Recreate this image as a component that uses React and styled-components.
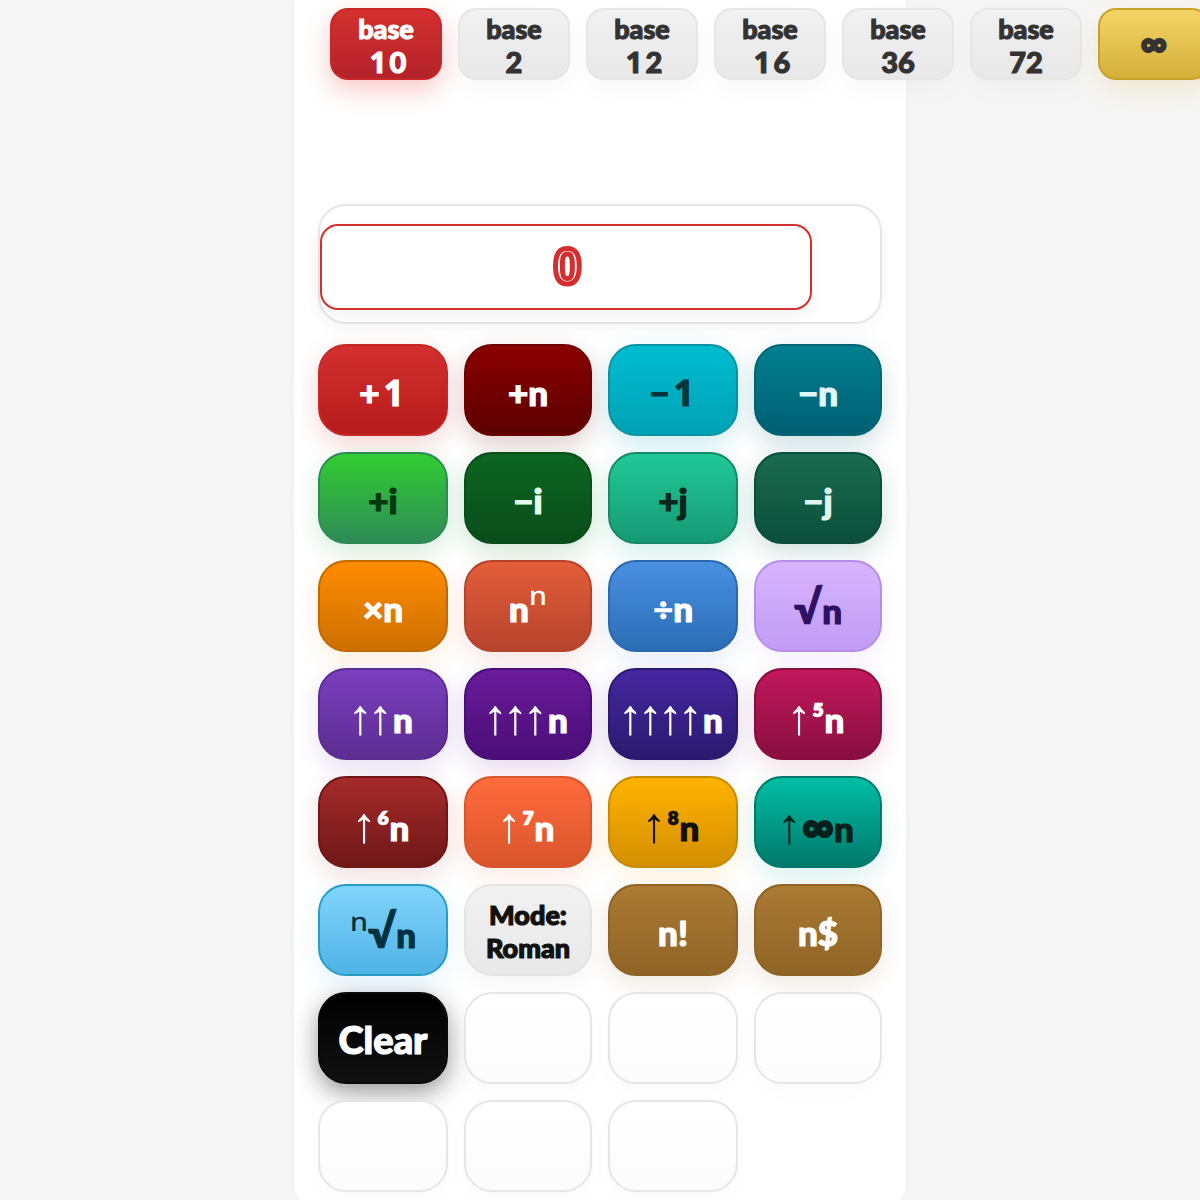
import React from 'react'
import styled, { createGlobalStyle } from 'styled-components'

const GlobalStyle = createGlobalStyle`
  html, body {
    margin: 0;
    height: 1200px;
    overflow: hidden;
    background: #f6f6f6;
  }
`

const Panel = styled.main`
  box-sizing: border-box;
  width: 612px;
  height: 1208px;
  margin: 0 auto;
  padding: 8px 24px 0;
  background: #fff;
  border-radius: 0 0 24px 24px;
  box-shadow: 0 0 12px rgba(0, 0, 0, 0.03);
  font-family: 'Lato', 'Liberation Sans', sans-serif;
  font-weight: 900;
`

const Tabs = styled.nav`
  display: flex;
  gap: 16px;
  width: 900px;
  padding-left: 12px;
  margin-bottom: 124px;
`

const Tab = styled.button`
  box-sizing: border-box;
  flex: 0 0 112px;
  height: 72px;
  padding: 2px 0 0;
  border: 2px solid ${p => p.$line};
  border-radius: 18px;
  background: linear-gradient(180deg, ${p => p.$from}, ${p => p.$to});
  box-shadow: 0 10px 26px ${p => p.$glow};
  color: ${p => p.$ink};
  font: inherit;
  font-size: 27px;
  line-height: 33px;
  -webkit-text-stroke: 1.1px ${p => p.$ink};
`

const TabNumber = styled.span`
  font-size: 29px;
`

const Display = styled.section`
  box-sizing: border-box;
  width: 564px;
  height: 120px;
  padding-top: 18px;
  margin-bottom: 20px;
  background: #fff;
  border: 2px solid #e6e6e6;
  border-radius: 28px;
  box-shadow: 0 6px 18px rgba(0, 0, 0, 0.03);
`

const Readout = styled.output`
  box-sizing: border-box;
  display: flex;
  align-items: center;
  justify-content: center;
  width: 492px;
  height: 86px;
  padding-left: 3px;
  background: #fff;
  border: 2px solid #d32f2f;
  border-radius: 18px;
  box-shadow: 0 6px 20px rgba(0, 0, 0, 0.05);
  color: #fff;
  font-family: 'Liberation Sans', sans-serif;
  font-weight: 700;
  font-size: 50px;
  -webkit-text-stroke: 5px #d32f2f;
`

const Keypad = styled.div`
  display: grid;
  grid-template-columns: 130px 128px 130px 128px;
  grid-auto-rows: 92px;
  gap: 16px;
`

const Key = styled.button`
  box-sizing: border-box;
  padding: ${p => p.$lift || 4}px 0 0;
  border: 2px solid ${p => p.$line};
  border-radius: 28px;
  background: linear-gradient(180deg, ${p => p.$from}, ${p => p.$to});
  box-shadow: 0 8px 24px ${p => p.$glow};
  color: ${p => p.$ink};
  font: inherit;
  font-size: ${p => p.$size || 35}px;
  line-height: ${p => p.$leading || 36}px;
  white-space: pre;
  -webkit-text-stroke: 1.2px ${p => p.$ink};
`

// the arrows and the raised n are a much lighter cut than the rest of the label
const Arrow = styled.span`
  display: inline-block;
  width: 20px;
  font-family: 'Liberation Sans', sans-serif;
  font-weight: 400;
  font-size: 50px;
  line-height: 0;
  text-indent: -5px;
  -webkit-text-stroke: 0;
  transform: translateY(1px);
`

const RaisedN = styled.span`
  display: inline-block;
  font-family: 'Noto Sans', sans-serif;
  font-weight: 500;
  font-size: 44px;
  line-height: 30px;
  -webkit-text-stroke: 0;
  transform: translateY(-4px);
`

const Bar = styled.span`
  margin: 0 3px 0 4px;
  font-family: 'Open Sans', sans-serif;
  font-weight: 700;
`

const Loop = styled.span`
  font-size: 1.25em;
  line-height: 0.8;
  -webkit-text-stroke: 2px currentColor;
`

const Power = styled.span`
  display: inline-block;
  font-size: 1.1em;
  line-height: 0.8;
  -webkit-text-stroke: 0.4px currentColor;
  transform: translateY(2px);
`

const Root = styled.span`
  font-size: 1.3em;
  line-height: 0.8;
  -webkit-text-stroke: 0.8px currentColor;
`

const Divide = styled.span`
  -webkit-text-stroke: 0.4px currentColor;
`

const glyphs = { '↑': Arrow, 'ⁿ': RaisedN, 1: Bar, '∞': Loop, '⁵': Power, '⁶': Power, '⁷': Power, '⁸': Power, '√': Root, '÷': Divide }

const renderLabel = text =>
  Array.from(text).map((ch, i) => {
    const Glyph = glyphs[ch]
    return Glyph ? <Glyph key={i}>{ch}</Glyph> : ch
  })

const tabs = [
  { top: 'base', bottom: '10', from: '#d5302f', to: '#b3222a', line: '#c62828', ink: '#fff', glow: 'rgba(229, 57, 53, 0.28)' },
  { top: 'base', bottom: '2' },
  { top: 'base', bottom: '12' },
  { top: 'base', bottom: '16' },
  { top: 'base', bottom: '36' },
  { top: 'base', bottom: '72' },
  { bottom: '∞', from: '#f3d566', to: '#d5af3a', line: '#c9a22c', glow: 'rgba(212, 175, 55, 0.2)' },
]

const key = (label, from, to, line, ink, glow, extra) => ({ label, from, to, line, ink, glow, ...extra })
const arrowRow = { lift: 10 }

const keys = [
  key('+1', '#d32f2f', '#b71c1c', '#c62828', '#fff', 'rgba(211, 47, 47, 0.2)'),
  key('+n', '#8b0000', '#5c0000', '#6d0000', '#fff', 'rgba(90, 0, 0, 0.2)'),
  key('−1', '#00bcd0', '#00a3b5', '#0a93a3', '#02353c', 'rgba(0, 160, 180, 0.2)'),
  key('−n', '#00808f', '#005f73', '#006473', '#e0f7fa', 'rgba(0, 96, 115, 0.2)'),
  key('+i', '#32cd32', '#2e8b57', '#2e8b57', '#013a0c', 'rgba(46, 160, 80, 0.2)'),
  key('−i', '#0b6623', '#0a4d1a', '#0a4d1a', '#e6ffea', 'rgba(20, 130, 50, 0.2)'),
  key('+j', '#20c997', '#179a73', '#168a68', '#06261c', 'rgba(32, 180, 140, 0.2)'),
  key('−j', '#1a6b4f', '#0b4f3a', '#0b4f3a', '#e0f5ee', 'rgba(20, 100, 75, 0.2)'),
  key('×n', '#ff8c00', '#cc7000', '#c06a00', '#fff', 'rgba(255, 140, 0, 0.14)'),
  key('nⁿ', '#e35d3a', '#b7442c', '#b5432c', '#fff', 'rgba(200, 80, 50, 0.14)'),
  key('÷n', '#4a90e2', '#2a6db5', '#2a69ad', '#fff', 'rgba(70, 140, 220, 0.14)'),
  key('√n', '#d8b4fe', '#c09cf5', '#b48ee8', '#2e1065', 'rgba(190, 150, 250, 0.14)'),
  key('↑↑n', '#7b3fbf', '#5c2d91', '#5c2d91', '#fff', 'rgba(100, 50, 170, 0.16)', arrowRow),
  key('↑↑↑n', '#6a1b9a', '#4a0e78', '#4a0e78', '#fff', 'rgba(90, 20, 140, 0.16)', arrowRow),
  key('↑↑↑↑n', '#4527a0', '#2a1a6e', '#2a1a6e', '#fff', 'rgba(60, 30, 140, 0.16)', arrowRow),
  key('↑⁵n', '#c2185b', '#880e3f', '#880e3f', '#fff', 'rgba(180, 20, 80, 0.14)', arrowRow),
  key('↑⁶n', '#a52a2a', '#701818', '#701818', '#fff', 'rgba(140, 30, 30, 0.14)', arrowRow),
  key('↑⁷n', '#ff6b3d', '#d9552b', '#d9552b', '#fff', 'rgba(255, 110, 60, 0.14)', arrowRow),
  key('↑⁸n', '#ffb300', '#d48f00', '#c78a00', '#111', 'rgba(255, 180, 0, 0.14)', arrowRow),
  key('↑∞n', '#00bfa5', '#00796b', '#00796b', '#06201c', 'rgba(0, 180, 150, 0.16)', arrowRow),
  key('ⁿ√n', '#81d4fa', '#4fb3e6', '#2a9dc4', '#01303f', 'rgba(90, 190, 240, 0.16)'),
  key('Mode:\nRoman', '#f1f1f1', '#e8e8e8', '#e5e5e5', '#111', 'rgba(0, 0, 0, 0.04)', { size: 27, leading: 33, lift: 1 }),
  key('n!', '#ab7a33', '#8f6426', '#8f6426', '#fff', 'rgba(140, 100, 40, 0.14)'),
  key('n$', '#ab7a33', '#8f6426', '#8f6426', '#fff', 'rgba(140, 100, 40, 0.14)'),
  key('Clear', '#000', '#111', '#0a0a0a', '#fff', 'rgba(0, 0, 0, 0.42)', { size: 38, lift: 1 }),
]

const blanks = 6

export default function App() {
  return (
    <>
      <GlobalStyle />
      <Panel>
        <Tabs>
          {tabs.map(t => (
            <Tab
              key={t.bottom}
              $from={t.from || '#f1f1f1'}
              $to={t.to || '#e8e8e8'}
              $line={t.line || '#e6e6e6'}
              $ink={t.ink || '#333'}
              $glow={t.glow || 'rgba(0, 0, 0, 0.03)'}
            >
              {t.top}
              {t.top && <br />}
              <TabNumber>{renderLabel(t.bottom)}</TabNumber>
            </Tab>
          ))}
        </Tabs>
        <Display>
          <Readout>0</Readout>
        </Display>
        <Keypad>
          {keys.map(k => (
            <Key
              key={k.label}
              $from={k.from}
              $to={k.to}
              $line={k.line}
              $ink={k.ink}
              $glow={k.glow}
              $size={k.size}
              $leading={k.leading}
              $lift={k.lift}
            >
              {renderLabel(k.label)}
            </Key>
          ))}
          {Array.from({ length: blanks }, (_, i) => (
            <Key key={i} $from="#fff" $to="#fcfcfc" $line="#e6e6e6" $ink="#333" $glow="rgba(0, 0, 0, 0.02)" />
          ))}
        </Keypad>
      </Panel>
    </>
  )
}
